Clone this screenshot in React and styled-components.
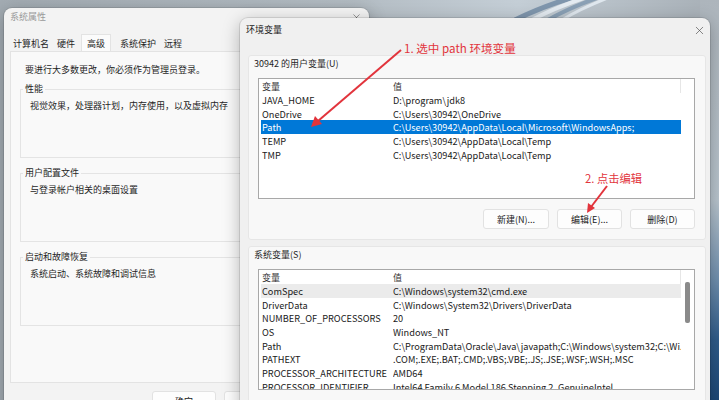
import React from "react";
import styled, { createGlobalStyle } from "styled-components";
import { X } from "lucide-react";

const GlobalStyle = createGlobalStyle`
  * { box-sizing: border-box; }
  html, body {
    margin: 0;
    padding: 0;
    background: #a9b2b9;
    overflow: hidden;
  }
  body {
    font-family: "Noto Sans CJK SC", "Noto Sans", sans-serif;
    color: #1a1a1a;
  }
`;

const userVars = [
  ["JAVA_HOME", "D:\\program\\jdk8"],
  ["OneDrive", "C:\\Users\\30942\\OneDrive"],
  ["Path", "C:\\Users\\30942\\AppData\\Local\\Microsoft\\WindowsApps;"],
  ["TEMP", "C:\\Users\\30942\\AppData\\Local\\Temp"],
  ["TMP", "C:\\Users\\30942\\AppData\\Local\\Temp"],
];

const sysVars = [
  ["ComSpec", "C:\\Windows\\system32\\cmd.exe"],
  ["DriverData", "C:\\Windows\\System32\\Drivers\\DriverData"],
  ["NUMBER_OF_PROCESSORS", "20"],
  ["OS", "Windows_NT"],
  ["Path", "C:\\ProgramData\\Oracle\\Java\\javapath;C:\\Windows\\system32;C:\\Wi..."],
  ["PATHEXT", ".COM;.EXE;.BAT;.CMD;.VBS;.VBE;.JS;.JSE;.WSF;.WSH;.MSC"],
  ["PROCESSOR_ARCHITECTURE", "AMD64"],
  ["PROCESSOR_IDENTIFIER", "Intel64 Family 6 Model 186 Stepping 2, GenuineIntel"],
];

const Wallpaper = () => (
  <WallSvg width="719" height="400" viewBox="0 0 719 400">
    <defs>
      <linearGradient id="base" x1="0" y1="0" x2="1" y2="0">
        <stop offset="0" stopColor="#a3acb3" />
        <stop offset="0.5" stopColor="#b4bdc4" />
        <stop offset="0.72" stopColor="#c4ced6" />
        <stop offset="1" stopColor="#a7afb6" />
      </linearGradient>
      <linearGradient id="edge" x1="0" y1="0" x2="0" y2="1">
        <stop offset="0" stopColor="#adb5bc" />
        <stop offset="0.5" stopColor="#b9c5ce" />
        <stop offset="0.7" stopColor="#6f8fae" />
        <stop offset="0.85" stopColor="#2f5c8a" />
        <stop offset="1" stopColor="#1d4877" />
      </linearGradient>
    </defs>
    <rect width="719" height="400" fill="url(#base)" />
    <rect x="700" width="19" height="400" fill="url(#edge)" />
    <path d="M515 20 C 535 10, 555 2, 585 -6" stroke="#7f96ad" strokeWidth="5" fill="none" />
    <path d="M532 20 C 550 10, 568 3, 596 -6" stroke="#e4ebf1" strokeWidth="4" fill="none" />
    <path d="M548 20 C 565 10, 582 3, 608 -6" stroke="#8aa0b5" strokeWidth="4" fill="none" />
    <path d="M562 20 C 578 10, 594 3, 618 -6" stroke="#dfe7ee" strokeWidth="3" fill="none" />
  </WallSvg>
);

const App = () => {
  return (
    <>
      <GlobalStyle />
      <Desktop>
        <Wallpaper />

        <SysWindow>
          <TitleBar $h={26} $pb={8} $pl={6} $inactive>
            <span>系统属性</span>
            <CloseBtn $mr={7}>
              <X size={11} strokeWidth={1.2} />
            </CloseBtn>
          </TitleBar>
          <TabList>
            <Tab>计算机名</Tab>
            <Tab>硬件</Tab>
            <Tab $active>高级</Tab>
            <Tab>系统保护</Tab>
            <Tab>远程</Tab>
          </TabList>
          <TabPanel>
            <Note>要进行大多数更改，你必须作为管理员登录。</Note>
            <Group>
              <Legend>性能</Legend>
              <GroupText>视觉效果，处理器计划，内存使用，以及虚拟内存</GroupText>
            </Group>
            <Group>
              <Legend>用户配置文件</Legend>
              <GroupText>与登录帐户相关的桌面设置</GroupText>
            </Group>
            <Group>
              <Legend>启动和故障恢复</Legend>
              <GroupText>系统启动、系统故障和调试信息</GroupText>
            </Group>
          </TabPanel>
          <DialogButtons>
            <Button>确定</Button>
            <Button>取消</Button>
            <Button>应用(A)</Button>
          </DialogButtons>
        </SysWindow>

        <EnvWindow>
          <TitleBar $h={24} $pl={6}>
            <span>环境变量</span>
            <CloseBtn $mr={4}>
              <X size={13} strokeWidth={1.2} />
            </CloseBtn>
          </TitleBar>
          <EnvBody>
            <Section $h={185}>
              <SectionLabel>30942 的用户变量(U)</SectionLabel>
              <VarList $h={121}>
                <ListBody>
                  <HeaderRow>
                    <span>变量</span>
                    <span>值</span>
                  </HeaderRow>
                  {userVars.map(([k, v]) => (
                    <Row key={k} $selected={k === "Path"}>
                      <Cell>{k}</Cell>
                      <Cell>{v}</Cell>
                    </Row>
                  ))}
                </ListBody>
                <Track />
              </VarList>
              <ActionRow>
                <Button $w={66}>新建(N)...</Button>
                <Button $w={65}>编辑(E)...</Button>
                <Button $w={65}>删除(D)</Button>
              </ActionRow>
            </Section>
            <Section $h={180}>
              <SectionLabel>系统变量(S)</SectionLabel>
              <VarList $h={121}>
                <ListBody>
                  <HeaderRow>
                    <span>变量</span>
                    <span>值</span>
                  </HeaderRow>
                  {sysVars.map(([k, v]) => (
                    <Row key={k} $hover={k === "ComSpec"}>
                      <Cell>{k}</Cell>
                      <Cell>{v}</Cell>
                    </Row>
                  ))}
                </ListBody>
                <Track>
                  <Thumb />
                </Track>
              </VarList>
            </Section>
          </EnvBody>
        </EnvWindow>

        <Arrows width="719" height="400" viewBox="0 0 719 400">
          <line x1="401" y1="50" x2="318" y2="121" stroke="#e2343c" strokeWidth="2" />
          <polygon points="311,127 315,116 322,124" fill="#e2343c" />
          <line x1="607" y1="186" x2="591" y2="207" stroke="#e2343c" strokeWidth="2" />
          <polygon points="587,213 588,203 595,208" fill="#e2343c" />
        </Arrows>
        <Annotation $x={404} $y={40} $size={11.6}>
          1. 选中 path 环境变量
        </Annotation>
        <Annotation $x={585} $y={170} $size={11.3}>
          2. 点击编辑
        </Annotation>
      </Desktop>
    </>
  );
};

const Desktop = styled.div`
  position: relative;
  width: 719px;
  height: 400px;
  overflow: hidden;
`;

const WallSvg = styled.svg`
  position: absolute;
  inset: 0;
  display: block;
`;

const Arrows = styled.svg`
  position: absolute;
  inset: 0;
  pointer-events: none;
`;

const Annotation = styled.span`
  position: absolute;
  left: ${(p) => p.$x}px;
  top: ${(p) => p.$y}px;
  font-size: ${(p) => p.$size}px;
  line-height: 16px;
  color: #e2343c;
  white-space: nowrap;
`;

const WindowBase = styled.div`
  position: absolute;
  display: flex;
  flex-direction: column;
  border-radius: 8px 8px 0 0;
  box-shadow: 0 0 0 1px rgba(0, 0, 0, 0.1), 0 4px 18px rgba(0, 0, 0, 0.28);
`;

const SysWindow = styled(WindowBase)`
  left: 4px;
  top: 8px;
  width: 365px;
  height: 420px;
  background: #f3f3f3;
`;

const EnvWindow = styled(WindowBase)`
  left: 240px;
  top: 18px;
  width: 470px;
  height: 400px;
  background: #f0f0f0;
`;

const TitleBar = styled.div`
  height: ${(p) => p.$h}px;
  flex: none;
  display: flex;
  align-items: center;
  justify-content: space-between;
  padding: 0 0 ${(p) => p.$pb || 0}px ${(p) => p.$pl}px;
  font-size: 9px;
  line-height: 12px;
  color: ${(p) => (p.$inactive ? "#9a9a9a" : "#1a1a1a")};
`;

const CloseBtn = styled.span`
  display: flex;
  margin-right: ${(p) => p.$mr}px;
  color: #4a4a4a;
`;

const TabList = styled.div`
  display: flex;
  height: 17px;
  flex: none;
  padding-left: 5px;
`;

const Tab = styled.div`
  display: flex;
  align-items: center;
  padding: 0 ${(p) => (p.$active ? 5 : 3)}px;
  margin: ${(p) => (p.$active ? "0 5px 0 2px" : "0")};
  font-size: 9px;
  color: #1f1f1f;
  background: ${(p) => (p.$active ? "#fbfbfb" : "transparent")};
  border: 1px solid ${(p) => (p.$active ? "#e3e3e3" : "transparent")};
  border-bottom: none;
`;

const TabPanel = styled.div`
  height: 332px;
  margin: 0 6px;
  padding: 12px 9px 0;
  background: #f9f9f9;
  border: 1px solid #e3e3e3;
  display: flex;
  flex-direction: column;
  gap: 9px;
`;

const Note = styled.div`
  font-size: 9px;
  line-height: 12px;
  padding-left: 5px;
  margin-bottom: -2px;
  color: #1f1f1f;
`;

const Group = styled.fieldset`
  margin: 0;
  height: 75px;
  padding: 0 2px;
  border: 1px solid #e4e4e4;
`;

const Legend = styled.legend`
  font-size: 9px;
  line-height: 12px;
  padding: 0 2px;
  color: #1f1f1f;
`;

const GroupText = styled.div`
  font-size: 9px;
  line-height: 12px;
  margin: 5px 0 0 7px;
  color: #1f1f1f;
`;

const DialogButtons = styled.div`
  display: flex;
  justify-content: flex-end;
  gap: 8px;
  padding: 8px 9px 0 0;
`;

const Button = styled.div`
  width: ${(p) => p.$w || 64}px;
  height: 20px;
  display: flex;
  align-items: center;
  justify-content: center;
  font-size: 9px;
  color: #1a1a1a;
  background: #fdfdfd;
  border: 1px solid #e2e2e2;
  border-radius: 3px;
`;

const EnvBody = styled.div`
  display: flex;
  flex-direction: column;
  gap: 6px;
  padding: 13px 4px 0 8px;
`;

const Section = styled.div`
  height: ${(p) => p.$h}px;
  flex: none;
  display: flex;
  flex-direction: column;
  padding: 2px 10px 0 5px;
  background: #f8f8f8;
  border: 1px solid #e6e6e6;
  border-radius: 3px;
`;

const SectionLabel = styled.div`
  font-size: 9px;
  line-height: 12px;
  color: #1f1f1f;
  margin-bottom: 8px;
`;

const VarList = styled.div`
  height: ${(p) => p.$h}px;
  margin-left: 4px;
  display: flex;
  background: #fff;
  border: 1px solid #a8a8a8;
  overflow: hidden;
`;

const ListBody = styled.div`
  flex: 1;
  display: flex;
  flex-direction: column;
  padding-left: 2px;
  padding-right: 1px;
`;

const HeaderRow = styled.div`
  height: 14px;
  flex: none;
  display: grid;
  grid-template-columns: 131px 1fr;
  align-items: center;
  padding-left: 1px;
  font-size: 9px;
  color: #333;
  border-right: 1px solid #e6e6e6;
`;

const Row = styled.div`
  height: 13.7px;
  flex: none;
  display: grid;
  grid-template-columns: 131px 1fr;
  align-items: center;
  padding-left: 1px;
  font-size: 9.2px;
  color: ${(p) => (p.$selected ? "#ffffff" : "#1a1a1a")};
  background: ${(p) =>
    p.$selected ? "#0078d7" : p.$hover ? "#ebebeb" : "transparent"};
`;

const Cell = styled.span`
  white-space: nowrap;
  overflow: hidden;
`;

const Track = styled.div`
  width: 12px;
  flex: none;
  padding: 12px 0 0 3px;
`;

const Thumb = styled.div`
  width: 5px;
  height: 41px;
  border-radius: 2px;
  background: #8a8a8a;
`;

const ActionRow = styled.div`
  display: flex;
  justify-content: flex-end;
  gap: 8px;
  margin-top: 10px;
`;

export default App;
